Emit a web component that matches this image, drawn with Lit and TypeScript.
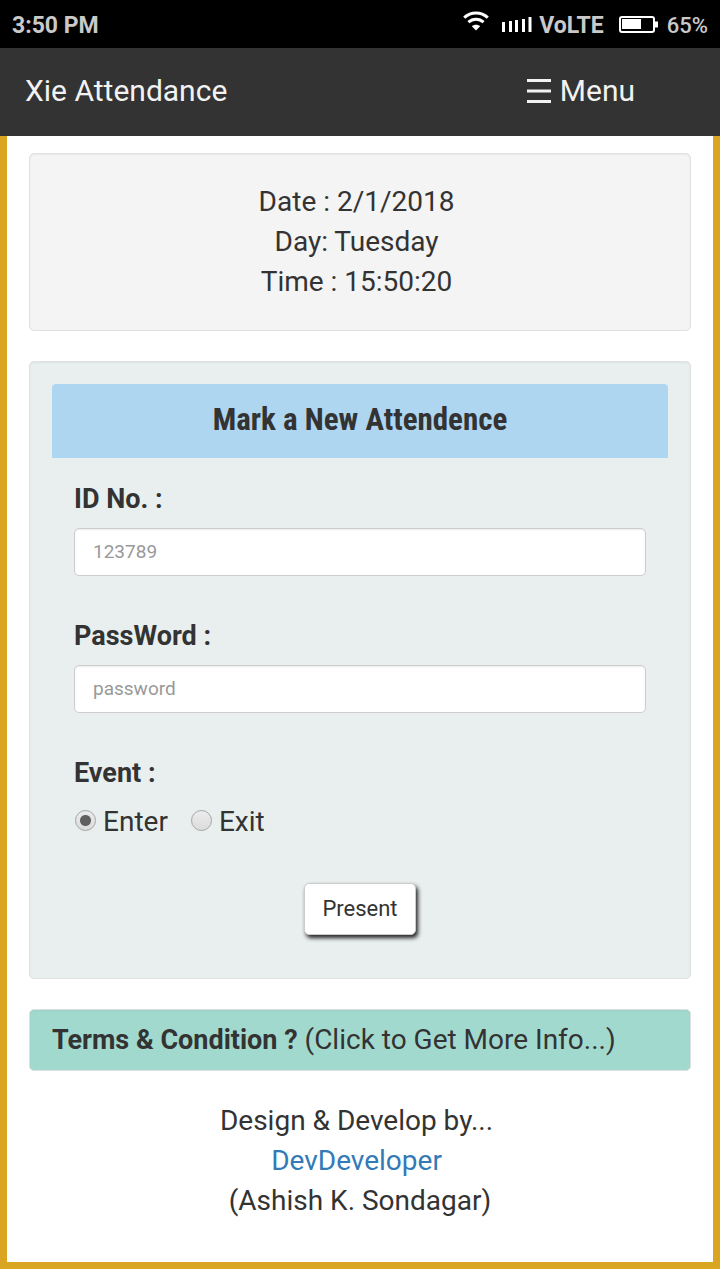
import { LitElement, html, css } from "lit";
import { customElement, state } from "lit/decorators.js";

@customElement("status-bar")
class StatusBar extends LitElement {
  static styles = css`
    :host {
      display: flex;
      align-items: center;
      justify-content: space-between;
      height: 48px;
      padding: 0 12px;
      box-sizing: border-box;
      background: #000;
      color: #c9c9c9;
      font: 700 23px/28px Roboto, sans-serif;
    }
    .side {
      display: flex;
      align-items: center;
    }
    .text { padding-top: 3px; }
    .wifi { margin: 0 13px 6px 0; }
    .signal { margin: 2px 7px 0 0; }
    .battery { margin: 0 9px 0 15px; }
    .percent { font-weight: 500; font-size: 22px; }
  `;

  render() {
    return html`
      <span class="text">3:50 PM</span>
      <div class="side">
        <svg class="wifi" width="26" height="20" viewBox="0 0 26 20" fill="none" stroke="#fff" stroke-width="3" aria-hidden="true">
          <path d="M1.2 6.6C8 .4 18 .4 24.8 6.6" />
          <path d="M5.4 11.2c4.4-4 10.800-4 15.200 0" />
          <path d="M13 19.400 8.800 15.200c2.400-2 6-2 8.400 0z" fill="#fff" stroke="none" />
        </svg>
        <svg class="signal" width="30" height="16" viewBox="0 0 30 16" fill="#fff" aria-hidden="true">
          <path d="M0 5h3v10H0zM7 4h3v11H7zM13 3h3v12h-3zM20 2h3v13h-3zM26.500 0h3v15h-3z" />
        </svg>
        <span class="text">VoLTE</span>
        <svg class="battery" width="39" height="17" viewBox="0 0 39 17" aria-hidden="true">
          <rect x="1" y="1" width="34" height="15" rx="2" fill="none" stroke="#fff" stroke-width="2" />
          <path d="M3 3h19v10H3zM36 5.500h3v6h-3z" fill="#fff" />
        </svg>
        <span class="text percent">65%</span>
      </div>
    `;
  }
}

@customElement("app-root")
class AppRoot extends LitElement {
  @state() private choice = "Enter";

  static styles = css`
    :host {
      display: block;
      color: #333;
      font: 28px/40px Roboto, sans-serif;
    }
    .nav {
      display: flex;
      align-items: center;
      justify-content: space-between;
      height: 88px;
      padding: 0 85px 3px 25px;
      box-sizing: border-box;
      background: #333;
      color: #f2f2f2;
      font-size: 30px;
    }
    .brand { color: inherit; text-decoration: none; }
    .menu {
      display: flex;
      align-items: center;
      gap: 9px;
      padding: 0;
      border: 0;
      background: none;
      color: inherit;
      font: inherit;
    }
    .frame {
      display: flex;
      flex-direction: column;
      gap: 30px;
      padding: 17px 22px 41px;
      border: 7px solid #daa520;
      border-top: 0;
      background: #fff;
    }
    .well {
      border: 1px solid #dfe1e1;
      border-radius: 5px;
      box-shadow: inset 0 1px 2px rgba(0, 0, 0, 0.05);
    }
    .today {
      padding: 28px 22px;
      background: #f4f4f4;
      text-align: center;
    }
    .form {
      padding: 22px;
      background: #e9efef;
    }
    .title {
      margin: 0;
      padding: 16px 0 18px;
      border-radius: 4px 4px 0 0;
      background: #aed6f1;
      font: 700 31px/40px "Roboto Condensed", "Liberation Sans Narrow", Roboto, sans-serif;
      text-align: center;
    }
    .fields {
      display: flex;
      flex-direction: column;
      gap: 40px;
      padding: 21px 22px;
    }
    .field {
      display: flex;
      flex-direction: column;
      gap: 9px;
    }
    .label,
    .legend,
    .strong { font-size: 27px; font-weight: 700; }
    .input {
      height: 48px;
      padding: 0 18px 2px;
      box-sizing: border-box;
      border: 1px solid #ccc;
      border-radius: 5px;
      background: #fff;
      box-shadow: inset 0 1px 2px rgba(0, 0, 0, 0.08);
      color: #555;
      font: 19px/28px Roboto, sans-serif;
    }
    .input::placeholder { color: #999; opacity: 1; }
    .events {
      min-width: 0;
      margin: 0;
      padding: 0;
      border: 0;
    }
    .legend { padding: 0; margin-bottom: 9px; }
    .options { display: flex; gap: 22px; }
    .option { display: flex; align-items: center; gap: 7px; }
    .radio {
      appearance: none;
      width: 21px;
      height: 21px;
      margin: 0 0 3px 1px;
      border: 1px solid #a5a5a5;
      border-radius: 50%;
      background: linear-gradient(#ececec, #dcdcdc);
    }
    .radio:checked {
      background: radial-gradient(circle, #606060 0 5px, transparent 6px), linear-gradient(#ececec, #dcdcdc);
    }
    .submit {
      align-self: center;
      height: 52px;
      margin: 1px 0 0;
      padding: 0 17px;
      border: 1px solid #ccc;
      border-radius: 5px;
      background: #fff;
      box-shadow: 2px 3px 4px #222;
      color: #333;
      font: 22px/32px Roboto, sans-serif;
    }
    .terms {
      padding: 10px 22px;
      background: #a2d9ce;
    }
    .terms-link { color: inherit; text-decoration: none; }
    .credit { text-align: center; }
    .author { color: #337ab7; text-decoration: none; }
  `;

  private option(name: string) {
    return html`
      <label class="option">
        <input class="radio" type="radio" name="event" .checked=${this.choice === name}
          @change=${() => (this.choice = name)} />
        ${name}
      </label>
    `;
  }

  render() {
    return html`
      <status-bar></status-bar>
      <nav class="nav">
        <a class="brand" href="#">Xie Attendance</a>
        <button class="menu" type="button">
          <svg width="24" height="24" viewBox="0 0 24 24" fill="#f2f2f2" aria-hidden="true">
            <path d="M0 0h24v3H0zM0 10.500h24v3H0zM0 21h24v3H0z" />
          </svg>
          Menu
        </button>
      </nav>
      <main class="frame">
        <section class="well today">
          <div>Date : 2/1/2018&nbsp;</div>
          <div>Day: Tuesday&nbsp;</div>
          <div>Time : 15:50:20&nbsp;</div>
        </section>
        <section class="well form">
          <h1 class="title">Mark a New Attendence</h1>
          <form class="fields">
            <div class="field">
              <label class="label" for="id">ID No. :</label>
              <input class="input" id="id" type="text" placeholder="123789" />
            </div>
            <div class="field">
              <label class="label" for="password">PassWord :</label>
              <input class="input" id="password" type="password" placeholder="password" />
            </div>
            <fieldset class="events">
              <legend class="legend">Event :</legend>
              <div class="options">${this.option("Enter")}${this.option("Exit")}</div>
            </fieldset>
            <button class="submit" type="button">Present</button>
          </form>
        </section>
        <section class="well terms">
          <a class="terms-link" href="#"><strong class="strong">Terms &amp; Condition ?</strong> (Click to Get More Info...)</a>
        </section>
        <footer class="credit">
          <div>Design &amp; Develop by...&nbsp;</div>
          <div><a class="author" href="#">DevDeveloper</a>&nbsp;</div>
          <div>(Ashish K. Sondagar)</div>
        </footer>
      </main>
    `;
  }
}
